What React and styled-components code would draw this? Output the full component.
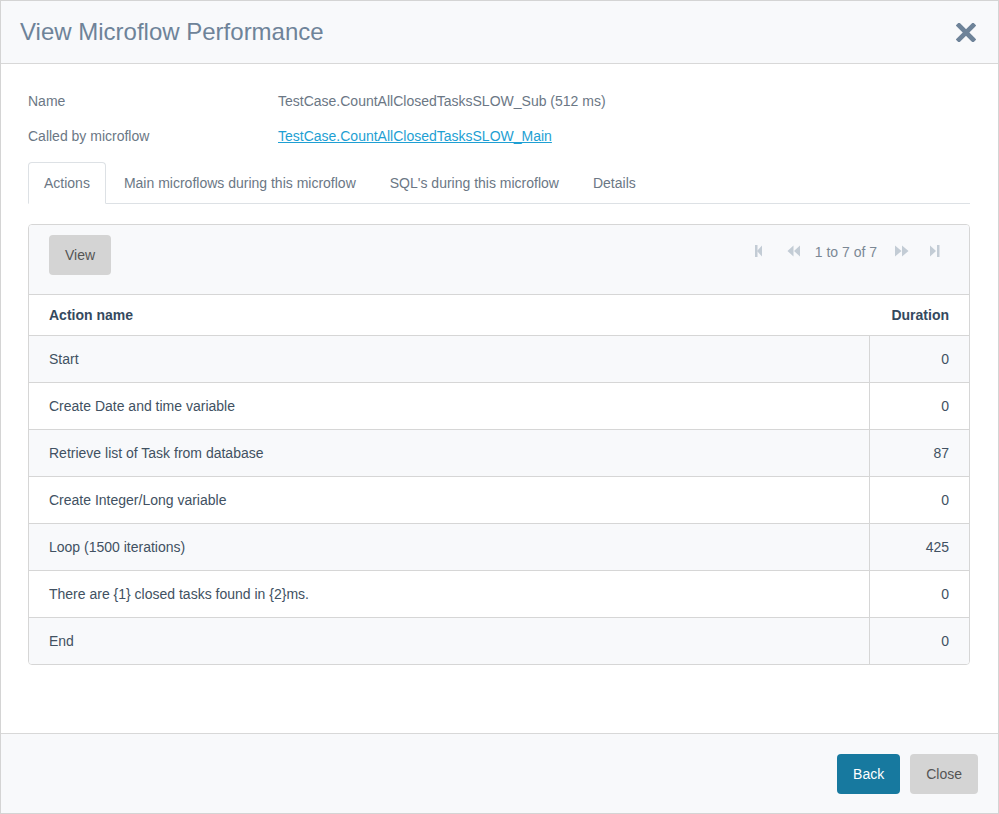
import React from "react";
import styled, { createGlobalStyle } from "styled-components";

const Global = createGlobalStyle`
  html, body { margin: 0; padding: 0; background: #fff; }
  body { font-family: "Liberation Sans", Arial, sans-serif; font-size: 14px; }
  * { box-sizing: border-box; }
`;

const Dialog = styled.div`
  width: 999px;
  height: 814px;
  border: 1px solid #d4d4d4;
  display: flex;
  flex-direction: column;
  background: #fff;
`;

const Header = styled.div`
  height: 63px;
  flex: none;
  background: #f8f9fb;
  border-bottom: 1px solid #d8d8d8;
  display: flex;
  align-items: center;
  justify-content: space-between;
  padding: 0 21px 0 19px;
`;

const Title = styled.h1`
  margin: 0;
  font-weight: normal;
  font-size: 24px;
  color: #6e8399;
`;

const CloseX = styled.button`
  border: 0;
  background: none;
  padding: 0;
  width: 22px;
  height: 22px;
  display: flex;
  align-items: center;
  justify-content: center;
  cursor: pointer;
`;

const Body = styled.div`
  flex: 1;
  padding: 19px 28px 0 27px;
`;

const InfoRow = styled.div`
  display: flex;
  height: 35px;
  align-items: center;
  color: #6b7785;
`;

const Label = styled.div`
  width: 250px;
`;

const Link = styled.a`
  color: #1e9fd3;
  text-decoration: underline;
`;

const Tabs = styled.div`
  display: flex;
  margin-top: 9px;
  border-bottom: 1px solid #dde1e5;
  height: 42px;
`;

const Tab = styled.div`
  height: 42px;
  padding: 0 15px;
  margin-right: 2px;
  display: flex;
  align-items: center;
  color: #6b7785;
  border: 1px solid ${(p) => (p.$active ? "#dde1e5" : "transparent")};
  border-bottom-color: ${(p) => (p.$active ? "#fff" : "transparent")};
  border-radius: 4px 4px 0 0;
  background: ${(p) => (p.$active ? "#fff" : "transparent")};
`;

const Grid = styled.div`
  margin-top: 20px;
  border: 1px solid #d6d6d6;
  border-radius: 4px;
  overflow: hidden;
`;

const Toolbar = styled.div`
  height: 70px;
  background: #f8f9fb;
  display: flex;
  justify-content: space-between;
  align-items: flex-start;
  padding: 10px 29px 0 20px;
  border-bottom: 1px solid #d6d6d6;
`;

const Button = styled.button`
  height: 40px;
  padding: 0 ${(p) => p.$px || 16}px;
  border: 0;
  border-radius: 4px;
  font-family: inherit;
  font-size: 14px;
  background: ${(p) => (p.$primary ? "#17799f" : "#d4d4d4")};
  color: ${(p) => (p.$primary ? "#fff" : "#555")};
`;

const Pager = styled.div`
  display: flex;
  align-items: center;
  height: 32px;
  color: #7b8895;
`;

const PagerIcon = styled.span`
  display: inline-flex;
  margin-right: ${(p) => p.$mr || 0}px;
`;

const PagerText = styled.span`
  margin-right: 18px;
  padding-top: 1px;
`;

const Table = styled.table`
  width: 100%;
  border-collapse: collapse;
  font-size: 14px;
`;

const Th = styled.th`
  height: 40px;
  text-align: ${(p) => p.$align || "left"};
  padding: 0 20px;
  color: #34495e;
  font-weight: bold;
  border-bottom: 1px solid #d6d6d6;
`;

const Tr = styled.tr`
  background: ${(p) => (p.$alt ? "#f8f9fb" : "#fff")};
  &:not(:last-child) td { border-bottom: 1px solid #d6d6d6; }
`;

const Td = styled.td`
  height: 47px;
  padding: 0 20px;
  color: #415162;
  text-align: ${(p) => p.$align || "left"};
  width: ${(p) => p.$w || "auto"};
  border-left: ${(p) => (p.$divider ? "1px solid #d6d6d6" : "0")};
`;

const Footer = styled.div`
  height: 80px;
  flex: none;
  border-top: 1px solid #d8d8d8;
  background: #f8f9fb;
  display: flex;
  justify-content: flex-end;
  align-items: center;
  gap: 10px;
  padding: 0 20px;
`;

const ICON = "#c3ccd5";

const FirstIcon = () => (
  <svg width="7" height="12" viewBox="0 0 7 12">
    <rect x="0" y="0" width="2.5" height="12" fill={ICON} />
    <path d="M7 0.5 L2 6 L7 11.5 Z" fill={ICON} />
  </svg>
);
const PrevIcon = () => (
  <svg width="13" height="12" viewBox="0 0 13 12">
    <path d="M6.5 0.5 L0.5 6 L6.5 11.5 Z M13 0.5 L7 6 L13 11.5 Z" fill={ICON} />
  </svg>
);
const NextIcon = () => (
  <svg width="14" height="12" viewBox="0 0 14 12">
    <path d="M0 0.5 L6.5 6 L0 11.5 Z M7 0.5 L13.5 6 L7 11.5 Z" fill={ICON} />
  </svg>
);
const LastIcon = () => (
  <svg width="10" height="12" viewBox="0 0 10 12">
    <path d="M0 0.5 L6 6 L0 11.5 Z" fill={ICON} />
    <rect x="7" y="0" width="2.5" height="12" fill={ICON} />
  </svg>
);

const rows = [
  ["Start", "0"],
  ["Create Date and time variable", "0"],
  ["Retrieve list of Task from database", "87"],
  ["Create Integer/Long variable", "0"],
  ["Loop (1500 iterations)", "425"],
  ["There are {1} closed tasks found in {2}ms.", "0"],
  ["End", "0"],
];

export default function App() {
  return (
    <>
      <Global />
      <Dialog>
        <Header>
          <Title>View Microflow Performance</Title>
          <CloseX aria-label="close">
            <svg width="20" height="19" viewBox="0 0 20 19">
              <path d="M3 2.5 L17 16.5 M17 2.5 L3 16.5" stroke="#6e8399" strokeWidth="4.6" strokeLinecap="square" />
            </svg>
          </CloseX>
        </Header>
        <Body>
          <InfoRow>
            <Label>Name</Label>
            <div>TestCase.CountAllClosedTasksSLOW_Sub (512 ms)</div>
          </InfoRow>
          <InfoRow>
            <Label>Called by microflow</Label>
            <Link href="#">TestCase.CountAllClosedTasksSLOW_Main</Link>
          </InfoRow>
          <Tabs>
            <Tab $active>Actions</Tab>
            <Tab>Main microflows during this microflow</Tab>
            <Tab>SQL's during this microflow</Tab>
            <Tab>Details</Tab>
          </Tabs>
          <Grid>
            <Toolbar>
              <Button $px={16}>View</Button>
              <Pager>
                <PagerIcon $mr={25}><FirstIcon /></PagerIcon>
                <PagerIcon $mr={15}><PrevIcon /></PagerIcon>
                <PagerText>1 to 7 of 7</PagerText>
                <PagerIcon $mr={21}><NextIcon /></PagerIcon>
                <PagerIcon><LastIcon /></PagerIcon>
              </Pager>
            </Toolbar>
            <Table>
              <thead>
                <tr>
                  <Th>Action name</Th>
                  <Th $align="right">Duration</Th>
                </tr>
              </thead>
              <tbody>
                {rows.map(([name, dur], i) => (
                  <Tr key={i} $alt={i % 2 === 0}>
                    <Td>{name}</Td>
                    <Td $align="right" $w="100px" $divider>{dur}</Td>
                  </Tr>
                ))}
              </tbody>
            </Table>
          </Grid>
        </Body>
        <Footer>
          <Button $primary $px={16}>Back</Button>
          <Button $px={16}>Close</Button>
        </Footer>
      </Dialog>
    </>
  );
}
